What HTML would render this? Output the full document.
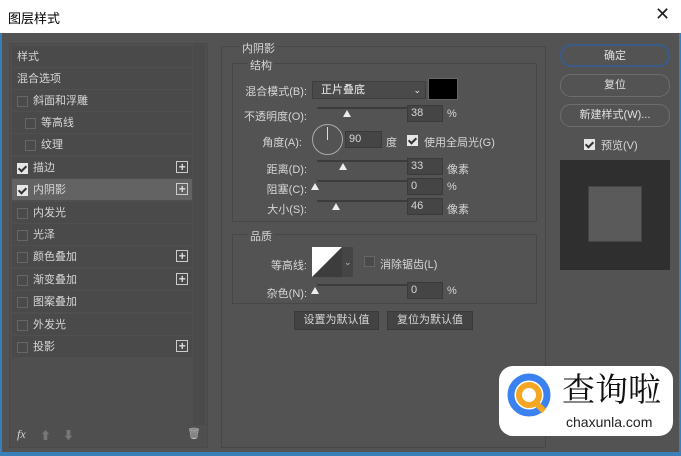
<!DOCTYPE html>
<html><head><meta charset="utf-8"><style>
*{margin:0;padding:0;box-sizing:border-box}
body{width:681px;height:456px;background:#535353;font-family:"Liberation Sans","Noto Sans CJK SC",sans-serif;font-size:11px;color:#d6d6d6;position:relative;overflow:hidden}
.a{position:absolute}
.title{left:0;top:0;width:681px;height:33px;background:#fff;color:#000;font-size:13px}
.row{position:absolute;left:12px;width:180px;height:21px;background:#4a4a4a;line-height:23px}
.row.sel{background:#636363}
.cb{position:absolute;width:11px;height:11px;border:1px solid #666;background:#4a4a4a;top:6px}
.cb.on{background:#e6e6e6;border-color:#e6e6e6}
.cb.on:after{content:"";position:absolute;left:2px;top:0px;width:3px;height:6px;border:solid #333;border-width:0 2px 2px 0;transform:rotate(45deg)}
.plus{position:absolute;left:164px;top:4px;width:12px;height:12px;border:1px solid #ccc;color:#ddd;font-size:12px;line-height:10px;text-align:center;font-weight:bold}
.box{position:absolute;border:1px solid #474747}
.lbl{position:absolute;text-align:right;width:80px}
.sl{position:absolute;height:2px;background:#3c3c3c;width:120px}
.th{position:absolute;width:0;height:0;border-left:4px solid transparent;border-right:4px solid transparent;border-bottom:7px solid #eee}
.in{position:absolute;width:36px;height:17px;background:#454545;border:1px solid #3a3a3a;padding-left:3px;line-height:15px}
.btn{position:absolute;left:560px;width:110px;height:23px;border:1px solid #6d6d6d;border-radius:11px;text-align:center;line-height:21px;color:#e0e0e0}
.fb{position:absolute;height:19px;background:#434343;border:1px solid #3a3a3a;text-align:center;line-height:17px}
</style></head><body>
<div class="a title"><span class="a" style="left:8px;top:8px">图层样式</span><span class="a" style="left:655px;top:4px;font-size:18px;color:#222">✕</span></div>
<div class="a" style="left:0;top:33px;width:2px;height:423px;background:#3a7fb8"></div>
<div class="a" style="right:0;top:33px;width:2px;height:423px;background:#3a7fb8"></div>
<div class="a" style="left:0;top:452px;width:681px;height:4px;background:#3a7fb8"></div>
<div class="a" style="left:9px;top:43px;width:199px;height:405px;border:1px solid #4a4a4a;background:#4f4f4f"></div>
<div class="a" style="left:193px;top:45px;width:12px;height:380px;background:#4a4a4a"></div>
<div class="row" style="top:46px"><span class="a" style="left:5px">样式</span></div>
<div class="row" style="top:68px"><span class="a" style="left:5px">混合选项</span></div>
<div class="row" style="top:90px"><i class="cb" style="left:5px"></i><span class="a" style="left:21px">斜面和浮雕</span></div>
<div class="row" style="top:112px"><i class="cb" style="left:13px"></i><span class="a" style="left:29px">等高线</span></div>
<div class="row" style="top:134px"><i class="cb" style="left:13px"></i><span class="a" style="left:29px">纹理</span></div>
<div class="row" style="top:157px"><i class="cb on" style="left:5px"></i><span class="a" style="left:21px">描边</span><i class="plus">+</i></div>
<div class="row sel" style="top:179px"><i class="cb on" style="left:5px"></i><span class="a" style="left:21px">内阴影</span><i class="plus">+</i></div>
<div class="row" style="top:202px"><i class="cb" style="left:5px"></i><span class="a" style="left:21px">内发光</span></div>
<div class="row" style="top:224px"><i class="cb" style="left:5px"></i><span class="a" style="left:21px">光泽</span></div>
<div class="row" style="top:246px"><i class="cb" style="left:5px"></i><span class="a" style="left:21px">颜色叠加</span><i class="plus">+</i></div>
<div class="row" style="top:269px"><i class="cb" style="left:5px"></i><span class="a" style="left:21px">渐变叠加</span><i class="plus">+</i></div>
<div class="row" style="top:291px"><i class="cb" style="left:5px"></i><span class="a" style="left:21px">图案叠加</span></div>
<div class="row" style="top:314px"><i class="cb" style="left:5px"></i><span class="a" style="left:21px">外发光</span></div>
<div class="row" style="top:336px"><i class="cb" style="left:5px"></i><span class="a" style="left:21px">投影</span><i class="plus">+</i></div>
<span class="a" style="left:17px;top:427px;font-style:italic;font-family:'Liberation Serif',serif;font-size:12px">fx</span>
<span class="a" style="left:40px;top:427px;color:#777">⬆</span><span class="a" style="left:63px;top:427px;color:#777">⬇</span>
<span class="a" style="left:187px;top:427px;color:#bbb">🗑</span>

<div class="box" style="left:221px;top:46px;width:325px;height:402px"></div>
<span class="a" style="left:240px;top:40px;background:#535353;padding:0 2px">内阴影</span>
<div class="box" style="left:232px;top:63px;width:305px;height:159px"></div>
<span class="a" style="left:248px;top:57px;background:#535353;padding:0 2px">结构</span>
<span class="lbl" style="left:227px;top:83px">混合模式(B):</span>
<div class="a" style="left:312px;top:81px;width:114px;height:18px;background:#4a4a4a;border:1px solid #3e3e3e;padding-left:8px;line-height:16px;color:#eee">正片叠底<span class="a" style="right:4px;top:0;font-size:9px">⌄</span></div>
<div class="a" style="left:428px;top:78px;width:30px;height:22px;background:#000;border:1px solid #666"></div>
<span class="lbl" style="left:227px;top:108px">不透明度(O):</span>
<div class="sl" style="left:317px;top:107px"></div><div class="th" style="left:343px;top:110px"></div>
<div class="in" style="left:407px;top:105px">38</div><span class="a" style="left:447px;top:108px">%</span>
<span class="lbl" style="left:222px;top:134px">角度(A):</span>
<div class="a" style="left:312px;top:124px;width:31px;height:31px;border:1px solid #aaa;border-radius:50%"></div>
<div class="a" style="left:327px;top:127px;width:1px;height:13px;background:#ddd"></div>
<div class="in" style="left:345px;top:131px;width:37px">90</div><span class="a" style="left:386px;top:134px">度</span>
<i class="cb on" style="left:407px;top:135px"></i><span class="a" style="left:424px;top:134px">使用全局光(G)</span>
<span class="lbl" style="left:227px;top:161px">距离(D):</span>
<div class="sl" style="left:317px;top:160px"></div><div class="th" style="left:339px;top:163px"></div>
<div class="in" style="left:407px;top:158px">33</div><span class="a" style="left:447px;top:161px">像素</span>
<span class="lbl" style="left:227px;top:181px">阻塞(C):</span>
<div class="sl" style="left:317px;top:180px"></div><div class="th" style="left:311px;top:183px"></div>
<div class="in" style="left:407px;top:178px">0</div><span class="a" style="left:447px;top:181px">%</span>
<span class="lbl" style="left:227px;top:201px">大小(S):</span>
<div class="sl" style="left:317px;top:200px"></div><div class="th" style="left:332px;top:203px"></div>
<div class="in" style="left:407px;top:198px">46</div><span class="a" style="left:447px;top:201px">像素</span>

<div class="box" style="left:232px;top:234px;width:305px;height:70px"></div>
<span class="a" style="left:248px;top:228px;background:#535353;padding:0 2px">品质</span>
<span class="lbl" style="left:227px;top:257px">等高线:</span>
<svg class="a" style="left:312px;top:247px" width="42" height="30"><rect width="30" height="30" fill="#fff"/><polygon points="0,30 30,0 30,30" fill="#3d3d3d"/><rect x="30" width="11" height="30" fill="#454545"/><text x="32" y="18" fill="#bbb" font-size="9">⌄</text></svg>
<i class="cb" style="left:364px;top:256px"></i><span class="a" style="left:380px;top:256px">消除锯齿(L)</span>
<span class="lbl" style="left:227px;top:285px">杂色(N):</span>
<div class="sl" style="left:317px;top:284px"></div><div class="th" style="left:311px;top:287px"></div>
<div class="in" style="left:407px;top:282px">0</div><span class="a" style="left:447px;top:285px">%</span>
<div class="fb" style="left:294px;top:311px;width:85px">设置为默认值</div>
<div class="fb" style="left:387px;top:311px;width:86px">复位为默认值</div>

<div class="btn" style="top:44px;border:2px solid #3a5b8a">确定</div>
<div class="btn" style="top:74px">复位</div>
<div class="btn" style="top:104px">新建样式(W)...</div>
<i class="cb on" style="left:584px;top:139px"></i><span class="a" style="left:601px;top:137px">预览(V)</span>
<div class="a" style="left:560px;top:160px;width:110px;height:110px;background:#2f2f2f"></div>
<div class="a" style="left:588px;top:186px;width:54px;height:56px;background:#5a5a5a;border:1px solid #444"></div>

<div class="a" style="left:499px;top:366px;width:174px;height:70px;background:#fff;border-radius:14px"></div>
<svg class="a" style="left:504px;top:370px" width="55" height="55"><circle cx="25" cy="25" r="18" fill="none" stroke="#3b82f0" stroke-width="7"/><circle cx="25" cy="25" r="10" fill="none" stroke="#f5a623" stroke-width="6"/><path d="M30 31 L40 41" stroke="#f5a623" stroke-width="6"/></svg>
<span class="a" style="left:562px;top:368px;font-size:33px;color:#111;font-family:'Noto Serif CJK SC',serif;line-height:40px">查询啦</span>
<span class="a" style="left:566px;top:414px;font-size:14px;color:#222">chaxunla.com</span>
</body></html>
